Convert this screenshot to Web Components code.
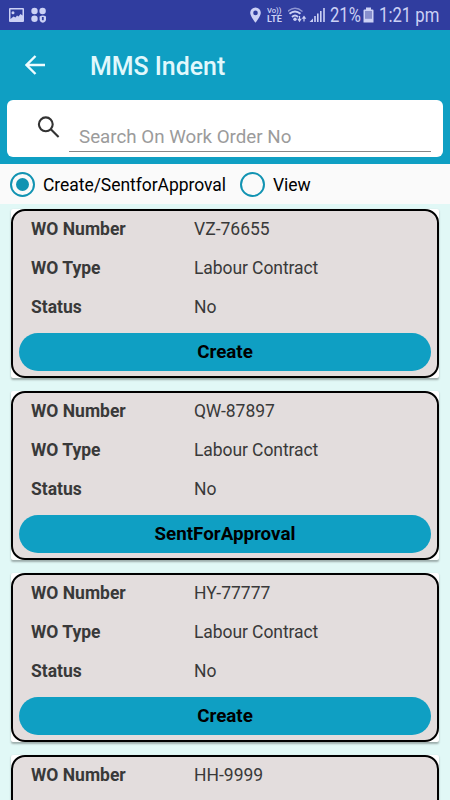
<!DOCTYPE html>
<html lang="en">
<head>
<meta charset="utf-8">
<title>MMS Indent</title>
<style>
html,body{margin:0;height:100%;overflow:hidden}
body{font-family:Roboto,"Noto Sans",sans-serif;background:#e1f8f6}
</style>
</head>
<body>
<mms-app></mms-app>
<script>
const define = (name, html) => customElements.define(name, class extends HTMLElement {
  connectedCallback() {
    if (this.shadowRoot) return;
    const t = document.createElement('template');
    t.innerHTML = html;
    this.attachShadow({mode: 'open'}).append(t.content.cloneNode(true));
  }
});

define('status-bar', `
<style>
:host{display:flex;height:30px;box-sizing:border-box;background:#303d9f;color:#ccd1f5;align-items:center;padding:0 11px 0 8px;white-space:nowrap}
svg{display:block;flex:none}
.gap{flex:1}
.pct{font-size:20px;line-height:30px;width:31px;margin-left:5px}
.time{font-size:20px;line-height:30px;width:60px;margin-left:5px}
span{display:block}
span i{display:inline-block;font-style:normal;transform-origin:0 50%}
.volte{font-size:7.500px;font-weight:500;line-height:8px;width:16px;margin-left:5px}
.volte span:last-child{font-size:9px;line-height:9px;font-weight:700}
.volte i{transform:scaleX(1.02)}
</style>
<svg width="17" height="30" viewBox="0 0 17 30"><path fill="#ccd1f5" fill-rule="evenodd" d="M2 8h13q1 0 1 1v12q0 1-1 1H2q-1 0-1-1V9q0-1 1-1zM2.500 9.500v9.500l3-2.500 2 1 1.500-2 1.500 1 2-2.500 2 1.500v-6zM5 11.300a1.500 1.500 0 1 1 0 3 1.500 1.500 0 0 1 0-3z"/></svg>
<svg width="17" height="30" viewBox="0 0 17 30" style="margin-left:5px"><g fill="#ccd1f5"><circle cx="4.500" cy="11" r="3.200"/><circle cx="12.600" cy="11" r="3.200"/><circle cx="4.500" cy="18.800" r="3.200"/><path d="M9.600 16.500q3.200-1.800 6.400 0v3q0 2.300-3.200 3.300-3.200-1-3.200-3.300z"/></g><path d="M12.800 17v3.200" stroke="#303d9f" stroke-width="1.800"/></svg>
<div class="gap"></div>
<svg width="12" height="30" viewBox="0 0 12 30"><path fill="#ccd1f5" fill-rule="evenodd" d="M5.500 7.500a5.300 5.300 0 0 1 5.300 5.300C10.800 16.500 5.500 22.700 5.500 22.700S.2 16.500.2 12.800A5.300 5.300 0 0 1 5.500 7.500zm0 3.100a2.300 2.300 0 1 0 0 4.600 2.300 2.300 0 0 0 0-4.600z"/></svg>
<div class="volte"><span><i>Vo))</i></span><span><i>LTE</i></span></div>
<svg width="21" height="30" viewBox="0 0 21 30" style="margin-left:5px"><g fill="none" stroke="#ccd1f5"><path stroke-width="1.300" opacity=".6" d="M-.500 11.500q7.500-6.500 15 0"/><path stroke-width="1.900" d="M1.500 13.800q5.500-4.800 11 0M4 17q3-2.800 6 0"/><path stroke-width="1.200" d="M11.500 16v4M16 21.500v-4"/></g><circle cx="7" cy="19.200" r="1.700" fill="#ccd1f5"/><path fill="#ccd1f5" d="M9.200 18.800h4.600l-2.300 3.400zM13.700 18.700h4.600L16 15.500z"/></svg>
<svg width="16" height="30" viewBox="0 0 16 30"><path d="M.5 22l3.500-3.500v3.500z" fill="#ccd1f5"/><path stroke="#ccd1f5" stroke-width="1.600" d="M6 22v-6M8.800 22v-8.500M11.800 22V11M15 22V8"/></svg>
<span class="pct"><i style="transform:scaleX(.83)">21%</i></span>
<svg width="11" height="30" viewBox="0 0 11 30" style="margin-left:2px"><path fill="#ccd1f5" d="M3 7.500h5v2h1.500q1 0 1 1v12H.5v-12q0-1 1-1H3z"/><path fill="#888fcc" d="M2 11h7v7.800H2z"/></svg>
<span class="time"><i style="transform:scaleX(.835)">1:21 pm</i></span>
`);

define('app-bar', `
<style>
:host{display:flex;height:70px;background:#0f9fc3;color:#e1f8fc;align-items:center}
svg{margin-left:25px;flex:none}
h1{margin:4px 0 0 44px;font-size:24.900px;line-height:30px;font-weight:500;white-space:nowrap}
</style>
<svg width="21" height="20" viewBox="0 0 21 20"><path d="M20 10H2M10.500 1l-9 9 9 9" fill="none" stroke="#eefcff" stroke-width="2.400"/></svg>
<h1><slot></slot></h1>
`);

define('search-box', `
<style>
:host{display:block;background:#0f9fc3;height:64px;padding:0 7px;box-sizing:border-box}
.box{display:flex;height:57px;background:#fff;border-radius:6px}
svg{margin:16px 0 0 30px;flex:none}
.field{margin:20px 12px 5px 9px;flex:1;border-bottom:1px solid #868686;padding-left:10px;font-size:18.750px;line-height:35px;height:31px;color:#9b9b9b;white-space:nowrap}
</style>
<div class="box"><svg width="23" height="23" viewBox="0 0 23 23"><g fill="none" stroke="#333" stroke-width="2.100"><circle cx="8.800" cy="8.300" r="6.900"/><path d="M13.800 13.300l7.800 7.800"/></g></svg><div class="field"><slot></slot></div></div>
`);

define('radio-option', `
<style>
:host{display:flex;align-items:center;font-size:17.500px;letter-spacing:-.050px;color:#000;white-space:nowrap}
.ring{width:25px;height:25px;box-sizing:border-box;border:2.500px solid #1193b2;border-radius:50%;display:grid;place-items:center;margin-right:8px}
.dot{width:13px;height:13px;border-radius:50%}
:host([checked]) .dot{background:#1193b2}
.label{padding-top:1px}
</style>
<span class="ring"><span class="dot"></span></span><span class="label"><slot></slot></span>
`);

define('work-order-card', `
<style>
:host{display:block;background:#fff;box-shadow:0 1.500px 2px rgba(0,0,0,.3);border-radius:2px}
.card{box-sizing:border-box;height:169px;border:2px solid #000;border-radius:14px;background:#e3dddd;padding:0 6px;overflow:hidden}
.row{display:grid;grid-template-columns:163px 1fr;height:38.750px;line-height:38px;padding-left:12px;font-size:17.500px;color:#393939;white-space:nowrap}
.rows{margin-top:-1px}
.row b{font-weight:700}
slot[name=type]{letter-spacing:-.080px}
.btn{height:38px;margin-top:7px;border-radius:19px;background:#0f9fc3;color:#000;font-weight:700;font-size:18.750px;line-height:39px;text-align:center}
:host([partial]) .row+.row,:host([partial]) .btn{display:none}
</style>
<div class="card">
<div class="rows">
<div class="row"><b>WO Number</b><span><slot name="number"></slot></span></div>
<div class="row"><b>WO Type</b><span><slot name="type"></slot></span></div>
<div class="row"><b>Status</b><span><slot name="status"></slot></span></div>
</div>
<div class="btn"><slot name="action"></slot></div>
</div>
`);

const orders = [['VZ-76655','Create'],['QW-87897','SentForApproval'],['HY-77777','Create'],['HH-9999']];
define('mms-app', `
<style>
:host{display:flex;flex-direction:column;height:100vh;overflow:hidden}
status-bar,app-bar,search-box,.modes{flex:none}
.modes{display:flex;height:40px;background:#fafafa;padding-left:10px;box-sizing:border-box}
.modes radio-option:first-child{width:230px}
.list{flex:1;min-height:0;overflow:hidden;display:flex;flex-direction:column;gap:13px;padding:5px 11px 0}
work-order-card{flex:none}
</style>
<status-bar></status-bar>
<app-bar>MMS Indent</app-bar>
<search-box>Search On Work Order No</search-box>
<div class="modes"><radio-option checked>Create/SentforApproval</radio-option><radio-option>View</radio-option></div>
<div class="list">${orders.map(([n, a]) => `<work-order-card${a ? '' : ' partial'}><span slot="number">${n}</span>${a ? `<span slot="type">Labour Contract</span><span slot="status">No</span><span slot="action">${a}</span>` : ''}</work-order-card>`).join('')}</div>
`);
</script>
</body>
</html>
